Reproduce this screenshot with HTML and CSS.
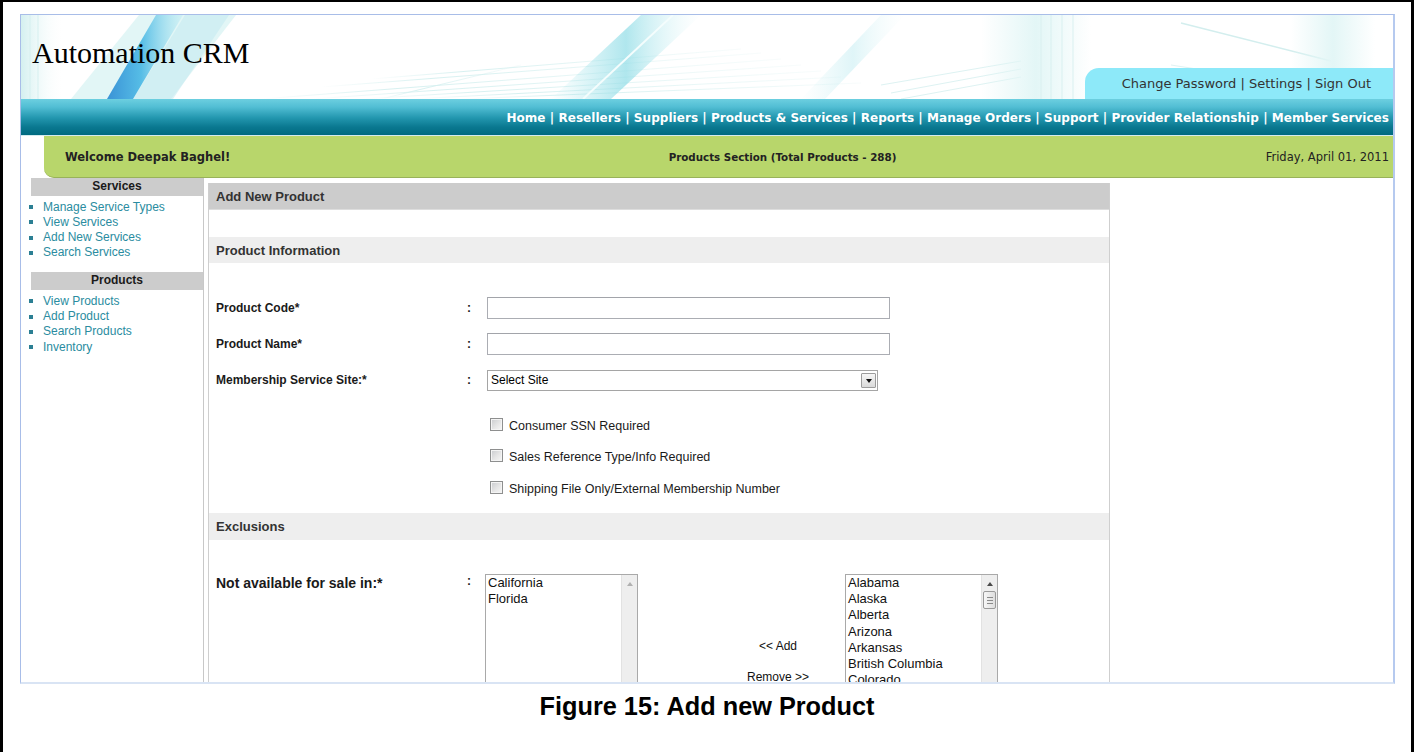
FILE: index.html
```html
<!DOCTYPE html>
<html lang="en">
<head>
<meta charset="utf-8">
<title>Automation CRM - Add New Product</title>
<link rel="stylesheet" href="styles.css">
</head>
<body>
<div class="sheet">
  <div class="screen">
    <header class="masthead">
      <svg class="masthead-art" viewBox="0 0 1372 84" preserveAspectRatio="none" aria-hidden="true">
        <defs>
          <linearGradient id="edgeWash" x1="0" y1="0" x2="1" y2="0">
            <stop offset="0" stop-color="#c9ecec" stop-opacity="0.8"/>
            <stop offset="1" stop-color="#ffffff" stop-opacity="0"/>
          </linearGradient>
          <linearGradient id="blueStreak" x1="0" y1="0" x2="1" y2="0">
            <stop offset="0" stop-color="#3a93d6"/>
            <stop offset="0.45" stop-color="#56bde6"/>
            <stop offset="1" stop-color="#a9e6f1" stop-opacity="0.3"/>
          </linearGradient>
          <linearGradient id="cyanBand" x1="0" y1="0" x2="1" y2="0">
            <stop offset="0" stop-color="#9fe3ea" stop-opacity="0"/>
            <stop offset="0.5" stop-color="#8edce6" stop-opacity="0.7"/>
            <stop offset="1" stop-color="#d4f3f5" stop-opacity="0"/>
          </linearGradient>
          <linearGradient id="column" x1="0" y1="0" x2="1" y2="0">
            <stop offset="0" stop-color="#e3f6f6" stop-opacity="0"/>
            <stop offset="0.5" stop-color="#e3f6f6"/>
            <stop offset="1" stop-color="#e3f6f6" stop-opacity="0"/>
          </linearGradient>
          <linearGradient id="fanFade" x1="0" y1="0" x2="1" y2="0">
            <stop offset="0" stop-color="#c4eaea" stop-opacity="0"/>
            <stop offset="0.25" stop-color="#c4eaea" stop-opacity="0.9"/>
            <stop offset="1" stop-color="#c4eaea" stop-opacity="0.15"/>
          </linearGradient>
        </defs>
        <rect width="1372" height="84" fill="#ffffff"/>
        <rect x="0" y="0" width="44" height="84" fill="url(#edgeWash)"/>
        <g stroke="#d5efef" stroke-width="1">
          <line x1="9" y1="0" x2="9" y2="84"/>
          <line x1="17" y1="0" x2="17" y2="84"/>
        </g>
        <!-- glow and main streak -->
        <polygon points="50,84 150,84 215,0 118,0" fill="#e2f6f6"/>
        <polygon points="112,84 152,84 208,0 164,0" fill="#c3eaf1" opacity="0.55"/>
        <polygon points="86,84 112,84 162,0 135,0" fill="url(#blueStreak)"/>
        <!-- fan of fine lines -->
        <g stroke="url(#fanFade)" stroke-width="1" fill="none" opacity="0.75">
          <line x1="240" y1="84" x2="760" y2="44"/>
          <line x1="290" y1="84" x2="780" y2="50"/>
          <line x1="340" y1="84" x2="800" y2="56"/>
          <line x1="390" y1="84" x2="820" y2="62"/>
          <line x1="440" y1="84" x2="840" y2="68"/>
          <line x1="300" y1="72" x2="740" y2="38"/>
          <line x1="350" y1="64" x2="720" y2="34"/>
          <line x1="360" y1="84" x2="500" y2="50"/>
        </g>
        <g stroke="#d6f0f0" stroke-width="1" fill="none" opacity="0.8">
          <line x1="860" y1="70" x2="1000" y2="46"/>
          <line x1="870" y1="78" x2="1000" y2="54"/>
          <line x1="880" y1="84" x2="1000" y2="62"/>
        </g>
        <!-- cyan diagonal bands -->
        <polygon points="530,84 590,84 680,0 620,0" fill="url(#cyanBand)"/>
        <line x1="562" y1="84" x2="652" y2="0" stroke="#f4fdfd" stroke-width="2"/>
        <polygon points="780,84 804,84 884,0 860,0" fill="url(#cyanBand)" opacity="0.4"/>
        <!-- pale columns on the right -->
        <rect x="960" y="0" width="110" height="84" fill="url(#column)"/>
        <g stroke="#d9f0f0" stroke-width="1">
          <line x1="1020" y1="0" x2="1020" y2="84"/>
          <line x1="1030" y1="0" x2="1030" y2="84"/>
          <line x1="1041" y1="0" x2="1041" y2="84"/>
          <line x1="1052" y1="0" x2="1052" y2="84"/>
        </g>
        <line x1="1160" y1="8" x2="1310" y2="46" stroke="#d3eeee" stroke-width="1.5"/>
        <line x1="1150" y1="50" x2="1240" y2="64" stroke="#e0f3f3" stroke-width="1"/>
        <rect x="1270" y="0" width="84" height="84" fill="url(#column)"/>
      </svg>
      <h1 class="brand">Automation CRM</h1>
      <div class="account-tab">Change Password | Settings | Sign Out</div>
    </header>

    <nav class="mainnav">Home | Resellers | Suppliers | Products &amp; Services | Reports | Manage Orders | Support | Provider Relationship | Member Services</nav>

    <div class="welcome-bar">
      <span class="welcome">Welcome Deepak Baghel!</span>
      <span class="section-title">Products Section (Total Products - 288)</span>
      <span class="today">Friday, April 01, 2011</span>
    </div>

    <div class="workspace">
      <aside class="sidebar">
        <h3 class="side-head">Services</h3>
        <ul class="side-links">
          <li><a href="#">Manage Service Types</a></li>
          <li><a href="#">View Services</a></li>
          <li><a href="#">Add New Services</a></li>
          <li><a href="#">Search Services</a></li>
        </ul>
        <h3 class="side-head">Products</h3>
        <ul class="side-links">
          <li><a href="#">View Products</a></li>
          <li><a href="#">Add Product</a></li>
          <li><a href="#">Search Products</a></li>
          <li><a href="#">Inventory</a></li>
        </ul>
      </aside>

      <main class="panel">
        <div class="bar bar-dark">Add New Product</div>
        <div class="bar bar-light">Product Information</div>

        <div class="form">
          <div class="row">
            <span class="label">Product Code*</span>
            <span class="colon">:</span>
            <span class="textbox"></span>
          </div>
          <div class="row">
            <span class="label">Product Name*</span>
            <span class="colon">:</span>
            <span class="textbox"></span>
          </div>
          <div class="row">
            <span class="label">Membership Service Site:*</span>
            <span class="colon">:</span>
            <div class="selectbox"><span class="select-value">Select Site</span><span class="select-btn"></span></div>
          </div>

          <div class="checks">
            <label class="check-row"><span class="checkbox"></span>Consumer SSN Required</label>
            <label class="check-row"><span class="checkbox"></span>Sales Reference Type/Info Required</label>
            <label class="check-row"><span class="checkbox"></span>Shipping File Only/External Membership Number</label>
          </div>
        </div>

        <div class="bar bar-light bar-excl">Exclusions</div>

        <div class="exclusions">
          <span class="label label-lg">Not available for sale in:*</span>
          <span class="colon colon-top">:</span>
          <div class="listbox">
            <ul class="options">
              <li>California</li>
              <li>Florida</li>
            </ul>
            <div class="scrollbar idle"><span class="arrow-up"></span></div>
          </div>
          <div class="mover">
            <span class="mover-btn">&lt;&lt; Add</span>
            <span class="mover-btn mover-remove">Remove &gt;&gt;</span>
          </div>
          <div class="listbox">
            <ul class="options">
              <li>Alabama</li>
              <li>Alaska</li>
              <li>Alberta</li>
              <li>Arizona</li>
              <li>Arkansas</li>
              <li>British Columbia</li>
              <li>Colorado</li>
            </ul>
            <div class="scrollbar"><span class="arrow-up"></span><span class="thumb"></span></div>
          </div>
        </div>
      </main>
    </div>
  </div>

  <p class="caption">Figure 15: Add new Product</p>
</div>
</body>
</html>
```

FILE: styles.css
```css
* {
  box-sizing: border-box;
}

html,
body {
  margin: 0;
  padding: 0;
  background: #ffffff;
}

body {
  font-family: "Liberation Sans", Arial, sans-serif;
  color: #000000;
}

/* document frame around the screen capture */
.sheet {
  width: 1414px;
  height: 752px;
  border-style: solid;
  border-color: #000000;
  border-width: 2px 3px 0 3px;
  padding: 12px 0 0 17px;
}

.screen {
  width: 1375px;
  height: 670px;
  border-style: solid;
  border-width: 1px 2px 2px 1px;
  border-color: #a8bde8 #b6caef #d9e4f4 #a8bde8;
  overflow: hidden;
  display: flex;
  flex-direction: column;
}

/* ---------- masthead ---------- */
.masthead {
  position: relative;
  flex-shrink: 0;
  height: 84px;
  display: flex;
  justify-content: space-between;
  align-items: flex-start;
}

.masthead-art {
  position: absolute;
  left: 0;
  top: 0;
  width: 100%;
  height: 100%;
}

.brand {
  position: relative;
  margin: 21px 0 0 11px;
  font: 400 30px/34px "Liberation Serif", "Times New Roman", serif;
  color: #000000;
}

.account-tab {
  position: relative;
  align-self: flex-end;
  width: 308px;
  height: 31px;
  padding-right: 22px;
  background: #8de9f9;
  border-top-left-radius: 14px;
  font: 13px/31px "DejaVu Sans", Verdana, sans-serif;
  color: #333333;
  text-align: right;
  white-space: nowrap;
}

/* ---------- main navigation ---------- */
.mainnav {
  flex-shrink: 0;
  height: 37px;
  padding: 3px 4px 0 0;
  background: linear-gradient(to bottom, #6ccfe0 0%, #52bed4 22%, #2397af 52%, #0a7890 78%, #006a80 100%);
  border-bottom: 1px solid #d3ebef;
  color: #ffffff;
  font: bold 12px/33px "DejaVu Sans", Verdana, sans-serif;
  letter-spacing: 0.05px;
  text-align: right;
  white-space: nowrap;
}

/* ---------- welcome strip ---------- */
.welcome-bar {
  flex-shrink: 0;
  height: 42px;
  margin-left: 23px;
  padding: 0 4px 0 21px;
  background: #b8d66b;
  border-bottom: 1px solid #98b25a;
  border-bottom-left-radius: 10px;
  display: grid;
  grid-template-columns: 411px 1fr 300px;
  align-items: center;
  font-family: "DejaVu Sans", Verdana, sans-serif;
  color: #222222;
  white-space: nowrap;
}

.welcome {
  font-weight: bold;
  font-size: 11.5px;
}

.section-title {
  font-weight: bold;
  font-size: 10.3px;
  text-align: center;
}

.today {
  font-size: 11.5px;
  text-align: right;
}

/* ---------- body ---------- */
.workspace {
  flex: 1;
  display: flex;
  min-height: 0;
}

.sidebar {
  flex-shrink: 0;
  width: 183px;
  border-right: 1px solid #c8c8c8;
}

.side-head {
  margin: 0 0 0 10px;
  height: 18px;
  background: #cccccc;
  font: bold 12px/17px "Liberation Sans", Arial, sans-serif;
  color: #1a1a1a;
  text-align: center;
}

.side-links {
  list-style: none;
  margin: 3.5px 0 11.5px;
  padding: 0;
  font: 12px/15.3px "Liberation Sans", Arial, sans-serif;
}

.side-links li {
  display: flex;
  align-items: center;
}

.side-links li::before {
  content: "";
  flex-shrink: 0;
  width: 4px;
  height: 4px;
  margin: 0 10px 0 8px;
  background: #2b7f93;
}

.side-links a {
  color: #2a8ca0;
  text-decoration: none;
}

/* ---------- content panel ---------- */
.panel {
  flex-shrink: 0;
  width: 902px;
  margin: 5px 0 0 4px;
  border-left: 1px solid #cfcfcf;
  border-right: 1px solid #cfcfcf;
}

.bar {
  display: flex;
  align-items: center;
  padding-left: 7px;
  font: bold 13px "Liberation Sans", Arial, sans-serif;
  color: #333333;
}

.bar-dark {
  height: 27px;
  padding-top: 1px;
  background: #cccccc;
  border-bottom: 1px solid #dddddd;
}

.bar-light {
  height: 26px;
  margin-top: 27px;
  background: #eeeeee;
}

.bar-excl {
  height: 27px;
  margin-top: 8.5px;
}

.form {
  padding: 27px 0 0 7px;
}

.row {
  display: grid;
  grid-template-columns: 251px 20px auto;
  align-items: center;
  height: 36px;
}

.label {
  font: bold 12px "Liberation Sans", Arial, sans-serif;
  color: #1a1a1a;
}

.label-lg {
  font-size: 14px;
  line-height: 16.2px;
  padding-top: 1px;
}

.colon {
  font: bold 12px "Liberation Sans", Arial, sans-serif;
  color: #1a1a1a;
}

.colon-top {
  line-height: 14px;
}

.textbox {
  display: block;
  width: 403px;
  height: 22px;
  border: 1px solid #abadb3;
  border-top-color: #a2a4aa;
  background: #ffffff;
}

.selectbox {
  width: 391px;
  height: 21px;
  padding: 0 1px 0 3px;
  border: 1px solid #a5a5a5;
  display: flex;
  align-items: center;
  font: 12px "Liberation Sans", Arial, sans-serif;
  color: #000000;
}

.select-btn {
  margin-left: auto;
  width: 15px;
  height: 15px;
  border: 1px solid #9c9c9c;
  border-radius: 1px;
  background: linear-gradient(#f6f6f6, #dadada);
  display: flex;
  align-items: center;
  justify-content: center;
}

.select-btn::before {
  content: "";
  border-left: 3.5px solid transparent;
  border-right: 3.5px solid transparent;
  border-top: 4px solid #111111;
  margin-top: 1px;
}

.checks {
  padding: 12px 0 0 274px;
}

.check-row {
  display: flex;
  align-items: center;
  height: 31.5px;
  font: 12.5px "Liberation Sans", Arial, sans-serif;
  color: #1a1a1a;
}

.checkbox {
  flex-shrink: 0;
  width: 13px;
  height: 13px;
  margin: -3px 6px 0 0;
  border: 1px solid #8e8f8f;
  box-shadow: inset 0 0 0 1px #f4f4f4;
  background: linear-gradient(135deg, #c9cbce 0%, #e6e6e6 55%, #f7f7f7 100%);
}

/* ---------- exclusion lists ---------- */
.exclusions {
  display: grid;
  grid-template-columns: 251px 18px 153px 207px 153px;
  align-items: start;
  margin-top: 34px;
  padding-left: 7px;
}

.listbox {
  height: 116px;
  border: 1px solid #a9a9a9;
  display: flex;
  background: #ffffff;
}

.options {
  flex: 1;
  list-style: none;
  margin: 0;
  padding: 0 0 0 2px;
  font: 13px/16.2px "Liberation Sans", Arial, sans-serif;
  color: #111111;
  overflow: hidden;
}

.scrollbar {
  flex-shrink: 0;
  width: 16px;
  background: #eeeeee;
  border-left: 1px solid #e2e2e2;
  display: flex;
  flex-direction: column;
  align-items: center;
}

.arrow-up {
  margin-top: 7px;
  border-left: 3.5px solid transparent;
  border-right: 3.5px solid transparent;
  border-bottom: 4px solid #4a4a4a;
}

.idle .arrow-up {
  border-bottom-color: #b0b0b0;
}

.thumb {
  margin-top: 5px;
  width: 13px;
  height: 18px;
  border: 1px solid #9a9a9a;
  border-radius: 2px;
  background: linear-gradient(to right, #f7f7f7, #dedede);
  display: flex;
  align-items: center;
  justify-content: center;
}

.thumb::before {
  content: "";
  width: 6px;
  height: 5px;
  border-top: 1px solid #8a8a8a;
  border-bottom: 1px solid #8a8a8a;
  background: linear-gradient(#8a8a8a, #8a8a8a) center / 100% 1px no-repeat;
}

.mover {
  display: flex;
  flex-direction: column;
  align-items: center;
  padding: 64.5px 0 0 73px;
  font: 12px/15px "Liberation Sans", Arial, sans-serif;
  color: #111111;
}

.mover-remove {
  margin-top: 16px;
}

/* ---------- caption ---------- */
.caption {
  margin: 8px 0 0 -17px;
  font: bold 25.3px/28px "Liberation Sans", Arial, sans-serif;
  text-align: center;
  color: #000000;
}
```
